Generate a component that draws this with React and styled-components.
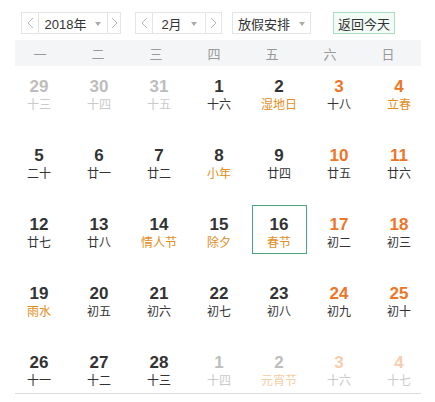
import styled, { createGlobalStyle } from "styled-components";

const GlobalStyle = createGlobalStyle`
  body {
    margin: 0;
    background: #fff;
    font-family: "Liberation Sans", "Noto Sans CJK SC", sans-serif;
  }
`;

const Page = styled.div`
  width: 435px;
  height: 402px;
  overflow: hidden;
  padding-top: 12px;
  box-sizing: border-box;
`;

const Toolbar = styled.div`
  display: flex;
  align-items: center;
  height: 22px;
  margin-left: 21px;
`;

const Picker = styled.div`
  display: flex;
  height: 22px;
  margin-right: ${(p) => p.$gap}px;
  border: 1px solid #e4e4e4;
  box-sizing: border-box;
`;

const ArrowBtn = styled.div`
  width: ${(p) => p.$w}px;
  display: flex;
  align-items: center;
  justify-content: center;
  border-left: ${(p) => (p.$side === "right" ? "1px solid #e4e4e4" : "none")};
  border-right: ${(p) => (p.$side === "left" ? "1px solid #e4e4e4" : "none")};
`;

const Select = styled.div`
  width: ${(p) => p.$w}px;
  display: flex;
  align-items: center;
  justify-content: center;
  gap: 9px;
  font-size: 13px;
  color: #333;
`;

const Caret = styled.span`
  width: 0;
  height: 0;
  border-left: 3.5px solid transparent;
  border-right: 3.5px solid transparent;
  border-top: 4px solid #aaa;
  margin-top: 1px;
`;

const TodayBtn = styled.div`
  height: 22px;
  width: 62px;
  box-sizing: border-box;
  border: 1px solid #a9dcc3;
  background: #f2fbf6;
  font-size: 13px;
  color: #333;
  display: flex;
  align-items: center;
  justify-content: center;
`;

const Board = styled.div`
  width: 406px;
  margin: 6px 0 0 15px;
  border-bottom: 1px solid #dcdcdc;
`;

const WeekBar = styled.div`
  height: 26px;
  background: #f4f5f6;
  display: grid;
  grid-template-columns: repeat(7, 58px);
  margin-left: 0;
  padding-left: 0;
  align-items: center;
  & > span {
    position: relative;
    left: -4px;
  }
`;

const WeekLabel = styled.span`
  text-align: center;
  font-size: 13px;
  color: #999;
`;

const Grid = styled.div`
  display: grid;
  grid-template-columns: repeat(7, 60px);
  grid-auto-rows: 49px;
  row-gap: 20px;
  margin-left: -6px;
  padding: 1px 0 1px;
`;

const Cell = styled.div`
  width: 55px;
  height: 49px;
  margin: 0 auto;
  box-sizing: border-box;
  border: 1px solid ${(p) => (p.$today ? "#45a97c" : "transparent")};
  display: flex;
  flex-direction: column;
  align-items: center;
  padding-top: 9px;
`;

const numColor = (p) => {
  if (p.$other) return p.$weekend ? "#f7cdb0" : "#bdbdbd";
  return p.$weekend ? "#ee7528" : "#333";
};

const lunarColor = (p) => {
  if (p.$other) return p.$fest ? "#f3cda6" : "#cacaca";
  return p.$fest ? "#e28d1c" : "#333";
};

const Num = styled.div`
  font-size: 17px;
  font-weight: bold;
  line-height: 20px;
  color: ${numColor};
`;

const Lunar = styled.div`
  font-size: 12px;
  line-height: 17px;
  color: ${lunarColor};
`;

const Chevron = ({ dir }) => (
  <svg width="7" height="12" viewBox="0 0 7 12">
    <path
      d={dir === "left" ? "M6 1 L1 6 L6 11" : "M1 1 L6 6 L1 11"}
      fill="none"
      stroke="#b5b5b5"
      strokeWidth="1"
    />
  </svg>
);

const weekdays = ["一", "二", "三", "四", "五", "六", "日"];

// [day, lunar, festival?, otherMonth?]
const days = [
  [29, "十三", 0, 1], [30, "十四", 0, 1], [31, "十五", 0, 1], [1, "十六"], [2, "湿地日", 1], [3, "十八"], [4, "立春", 1],
  [5, "二十"], [6, "廿一"], [7, "廿二"], [8, "小年", 1], [9, "廿四"], [10, "廿五"], [11, "廿六"],
  [12, "廿七"], [13, "廿八"], [14, "情人节", 1], [15, "除夕", 1], [16, "春节", 1], [17, "初二"], [18, "初三"],
  [19, "雨水", 1], [20, "初五"], [21, "初六"], [22, "初七"], [23, "初八"], [24, "初九"], [25, "初十"],
  [26, "十一"], [27, "十二"], [28, "十三"], [1, "十四", 0, 1], [2, "元宵节", 1, 1], [3, "十六", 0, 1], [4, "十七", 0, 1],
];

export default function App() {
  return (
    <Page>
      <GlobalStyle />
      <Toolbar>
        <Picker $gap={14}>
          <ArrowBtn $w={16} $side="left"><Chevron dir="left" /></ArrowBtn>
          <Select $w={68}>2018年<Caret /></Select>
          <ArrowBtn $w={12} $side="right"><Chevron dir="right" /></ArrowBtn>
        </Picker>
        <Picker $gap={10}>
          <ArrowBtn $w={16} $side="left"><Chevron dir="left" /></ArrowBtn>
          <Select $w={52}>2月<Caret /></Select>
          <ArrowBtn $w={15} $side="right"><Chevron dir="right" /></ArrowBtn>
        </Picker>
        <Picker $gap={22}>
          <Select $w={77}>放假安排<Caret /></Select>
        </Picker>
        <TodayBtn>返回今天</TodayBtn>
      </Toolbar>
      <Board>
        <WeekBar>
          {weekdays.map((w) => (
            <WeekLabel key={w}>{w}</WeekLabel>
          ))}
        </WeekBar>
        <Grid>
          {days.map(([d, l, fest, other], i) => {
            const weekend = i % 7 >= 5;
            return (
              <Cell key={i} $today={d === 16 && !other}>
                <Num $weekend={weekend} $other={other}>{d}</Num>
                <Lunar $fest={fest} $other={other}>{l}</Lunar>
              </Cell>
            );
          })}
        </Grid>
      </Board>
    </Page>
  );
}
